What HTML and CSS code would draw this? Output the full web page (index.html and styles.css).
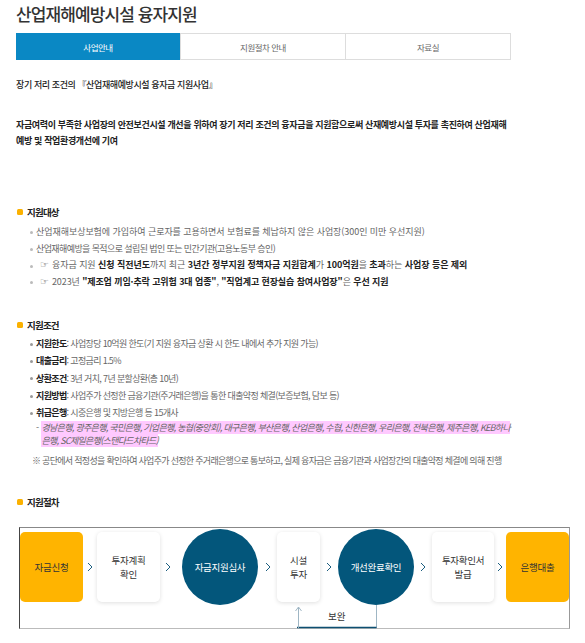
FILE: index.html
```html
<!DOCTYPE html>
<html lang="ko">
<head>
<meta charset="utf-8">
<title>산업재해예방시설 융자지원</title>
<link rel="stylesheet" href="styles.css">
</head>
<body>
<div class="wrap">
  <h1 class="title">산업재해예방시설 융자지원</h1>
  <div class="tabs">
    <div class="tab active">사업안내</div>
    <div class="tab">지원절차 안내</div>
    <div class="tab">자료실</div>
  </div>

  <p class="intro">장기 저리 조건의 『산업재해예방시설 융자금 지원사업』</p>
  <p class="lead">자금여력이 부족한 사업장의 안전보건시설 개선을 위하여 장기 저리 조건의 융자금을 지원함으로써 산재예방시설 투자를 촉진하여 산업재해예방 및 작업환경개선에 기여</p>

  <h2 class="sec sec-first">지원대상</h2>
  <ul class="list list-a">
    <li class="wide">산업재해보상보험에 가입하여 근로자를 고용하면서 보험료를 체납하지 않은 사업장(300인 미만 우선지원)</li>
    <li>산업재해예방을 목적으로 설립된 법인 또는 민간기관(고용노동부 승인)</li>
    <li class="wider"><span class="hand">☞</span>융자금 지원 <b>신청 직전년도</b>까지 최근 <b>3년간 정부지원 정책자금 지원합계</b>가 <b>100억원</b>을 <b>초과</b>하는 <b>사업장 등은 제외</b></li>
    <li class="mid"><span class="hand">☞</span>2023년 <b>"제조업 끼임·추락 고위험 3대 업종"</b>, <b>"직업계고 현장실습 참여사업장"</b>은 <b>우선 지원</b></li>
  </ul>

  <h2 class="sec sec-second">지원조건</h2>
  <ul class="list list-b">
    <li><b>지원한도</b>: 사업장당 10억원 한도(기 지원 융자금 상환 시 한도 내에서 추가 지원 가능)</li>
    <li><b>대출금리</b>: 고정금리 1.5%</li>
    <li><b>상환조건</b>: 3년 거치, 7년 분할상환(총 10년)</li>
    <li><b>지원방법</b>: 사업주가 선정한 금융기관(주거래은행)을 통한 대출약정 체결(보증보험, 담보 등)</li>
    <li><b>취급은행</b>: 시중은행 및 지방은행 등 15개사</li>
  </ul>
  <div class="banks">
    <span class="dash">-</span>
    <div class="bank-text"><span class="hl">경남은행, 광주은행, 국민은행, 기업은행, 농협(중앙회), 대구은행, 부산은행, 산업은행, 수협, 신한은행, 우리은행, 전북은행, 제주은행, KEB하나은행, SC제일은행(스탠다드차타드)</span></div>
  </div>
  <p class="note">※ 공단에서 적정성을 확인하여 사업주가 선정한 주거래은행으로 통보하고, 실제 융자금은 금융기관과 사업장간의 대출약정 체결에 의해 진행</p>

  <h2 class="sec sec-third">지원절차</h2>
  <div class="flow">
    <div class="flow-row">
      <div class="step yellow">자금신청</div>
      <div class="arrow"><svg width="6" height="10" viewBox="0 0 6 10"><polyline points="1,1 5,5 1,9" fill="none" stroke="#1d5f80" stroke-width="1"/></svg></div>
      <div class="step card">투자계획<br>확인</div>
      <div class="arrow arrow-wide"><svg width="6" height="10" viewBox="0 0 6 10"><polyline points="1,1 5,5 1,9" fill="none" stroke="#1d5f80" stroke-width="1"/></svg></div>
      <div class="step circle">자금지원심사</div>
      <div class="arrow arrow-mid"><svg width="6" height="10" viewBox="0 0 6 10"><polyline points="1,1 5,5 1,9" fill="none" stroke="#1d5f80" stroke-width="1"/></svg></div>
      <div class="step card narrow">시설<br>투자</div>
      <div class="arrow arrow-mid2"><svg width="6" height="10" viewBox="0 0 6 10"><polyline points="1,1 5,5 1,9" fill="none" stroke="#1d5f80" stroke-width="1"/></svg></div>
      <div class="step circle">개선완료확인</div>
      <div class="arrow arrow-mid2"><svg width="6" height="10" viewBox="0 0 6 10"><polyline points="1,1 5,5 1,9" fill="none" stroke="#1d5f80" stroke-width="1"/></svg></div>
      <div class="step card w62">투자확인서<br>발급</div>
      <div class="arrow arrow-small"><svg width="6" height="10" viewBox="0 0 6 10"><polyline points="1,1 5,5 1,9" fill="none" stroke="#1d5f80" stroke-width="1"/></svg></div>
      <div class="step yellow">은행대출</div>
    </div>
    <div class="loop">
      <svg class="loop-svg" width="84" height="25" viewBox="0 0 84 25">
        <line x1="80.5" y1="0" x2="80.5" y2="23" stroke="#9fb6c4" stroke-width="1"/>
        <line x1="1" y1="22.5" x2="80.5" y2="22.5" stroke="#0d4f72" stroke-width="1.4"/>
        <line x1="2.5" y1="2" x2="2.5" y2="23" stroke="#9fb6c4" stroke-width="1"/>
        <polyline points="-0.5,6 2.5,2 5.5,6" fill="none" stroke="#9fb6c4" stroke-width="1"/>
      </svg>
      <span class="loop-label">보완</span>
    </div>
  </div>
</div>
</body>
</html>
```

FILE: styles.css
```css
* { box-sizing: border-box; }

body {
  margin: 0;
  background: #fff;
  font-family: "Noto Sans CJK KR", "Noto Sans", sans-serif;
  color: #333;
}

.wrap {
  width: 511px;
  padding-left: 16px;
}

.title {
  margin: 0;
  font-size: 17px;
  line-height: 28px;
  font-weight: 500;
  letter-spacing: -0.9px;
  color: #333;
}

.tabs {
  display: flex;
  margin-top: 5px;
  height: 27px;
  border: 1px solid #ddd;
}

.tab {
  flex: 1;
  display: flex;
  align-items: center;
  justify-content: center;
  font-size: 8.5px;
  letter-spacing: -0.5px;
  color: #666;
  background: #fff;
  border-left: 1px solid #ddd;
}

.tab:first-child { border-left: none; }

.tab.active {
  background: #0a88c4;
  color: #fff;
  margin: -1px 0 -1px -1px;
}

.intro {
  margin: 17px 0 0;
  font-size: 9px;
  line-height: 16px;
  letter-spacing: -0.4px;
  color: #222;
  font-weight: 500;
}

.lead {
  margin: 24px 0 0;
  font-size: 9px;
  line-height: 16px;
  letter-spacing: -0.35px;
  font-weight: 700;
  color: #222;
}

.sec {
  display: flex;
  align-items: center;
  gap: 4px;
  margin: 0;
  font-size: 9.5px;
  line-height: 16px;
  font-weight: 700;
  letter-spacing: -0.8px;
  color: #222;
}

.sec::before {
  content: "";
  width: 6px;
  height: 6px;
  margin-left: 1px;
  border-radius: 1.5px;
  background: #fbb100;
}

.sec-first { margin-top: 55px; }
.sec-second { margin-top: 26px; }
.sec-third { margin-top: 25px; }

.list {
  list-style: none;
  margin: 0;
  padding: 0 0 0 14px;
  font-size: 9px;
  color: #666;
}

.list li {
  position: relative;
  padding-left: 6px;
}

.list li::before {
  content: "";
  position: absolute;
  left: 0;
  top: 50%;
  width: 3px;
  height: 3px;
  margin-top: -1px;
  border-radius: 50%;
  background: #bbb;
}

.list b { color: #222; font-weight: 700; }

.list-a { margin-top: 4px; letter-spacing: -0.6px; }
.list-a li { line-height: 16.7px; }
.list-a li.wide { letter-spacing: -0.05px; }
.list-a li.wider { letter-spacing: -0.05px; }
.list-a li.mid { letter-spacing: -0.1px; }

.list-b { margin-top: 2px; letter-spacing: -0.65px; }
.list-b li { line-height: 17.4px; }
.list-b li::before { background: #999; }

.hand {
  margin: 0 3px 0 4px;
  font-size: 10px;
  letter-spacing: 0;
  color: #777;
  font-family: "DejaVu Sans", sans-serif;
}

.banks {
  display: flex;
  gap: 3px;
  margin: -1px 0 0 20px;
  font-size: 9px;
  line-height: 13.5px;
  letter-spacing: -0.7px;
  color: #666;
}

.dash { flex: none; }

.bank-text { flex: 1; }

.hl {
  background: #ffc9ff;
  font-style: italic;
  color: #666;
}

.note {
  margin: 5px 0 0 16px;
  font-size: 9px;
  line-height: 16px;
  letter-spacing: -0.7px;
  color: #666;
}

.flow {
  position: relative;
  width: 551px;
  height: 102px;
  margin: 17px 0 0 3px;
  padding-top: 1px;
  border-top: 1px solid #888;
  border-left: 1px solid #444;
  border-right: 1px solid #999;
  border-bottom: 1px solid #bbb;
}

.flow-row {
  display: flex;
  align-items: center;
  height: 76px;
}

.step {
  flex: none;
  width: 63px;
  height: 70px;
  display: flex;
  align-items: center;
  justify-content: center;
  text-align: center;
  font-size: 9.5px;
  line-height: 14px;
  letter-spacing: -0.3px;
  color: #333;
  border-radius: 5px;
}

.step.yellow { background: #ffb400; }

.step.card {
  background: #fff;
  box-shadow: 0 1px 4px rgba(0, 0, 0, 0.13);
}

.step.narrow { width: 43px; }
.step.w62 { width: 62px; }

.step.circle {
  width: 76px;
  height: 76px;
  border-radius: 50%;
  background: #03567b;
  color: #fff;
}

.arrow {
  flex: none;
  width: 14px;
  display: flex;
  justify-content: center;
  align-items: center;
}

.arrow-wide { width: 22px; justify-content: flex-start; padding-left: 5px; }
.arrow-mid { width: 19px; }
.arrow-mid2 { width: 18px; }
.arrow-small { width: 12px; }

.loop {
  position: absolute;
  left: 276px;
  top: 77px;
  width: 84px;
  height: 24px;
}

.loop-svg {
  position: absolute;
  left: 0;
  top: 0;
  overflow: visible;
}

.loop-label {
  position: absolute;
  left: 32px;
  top: 4px;
  font-size: 9.5px;
  line-height: 14px;
  color: #333;
}
```
